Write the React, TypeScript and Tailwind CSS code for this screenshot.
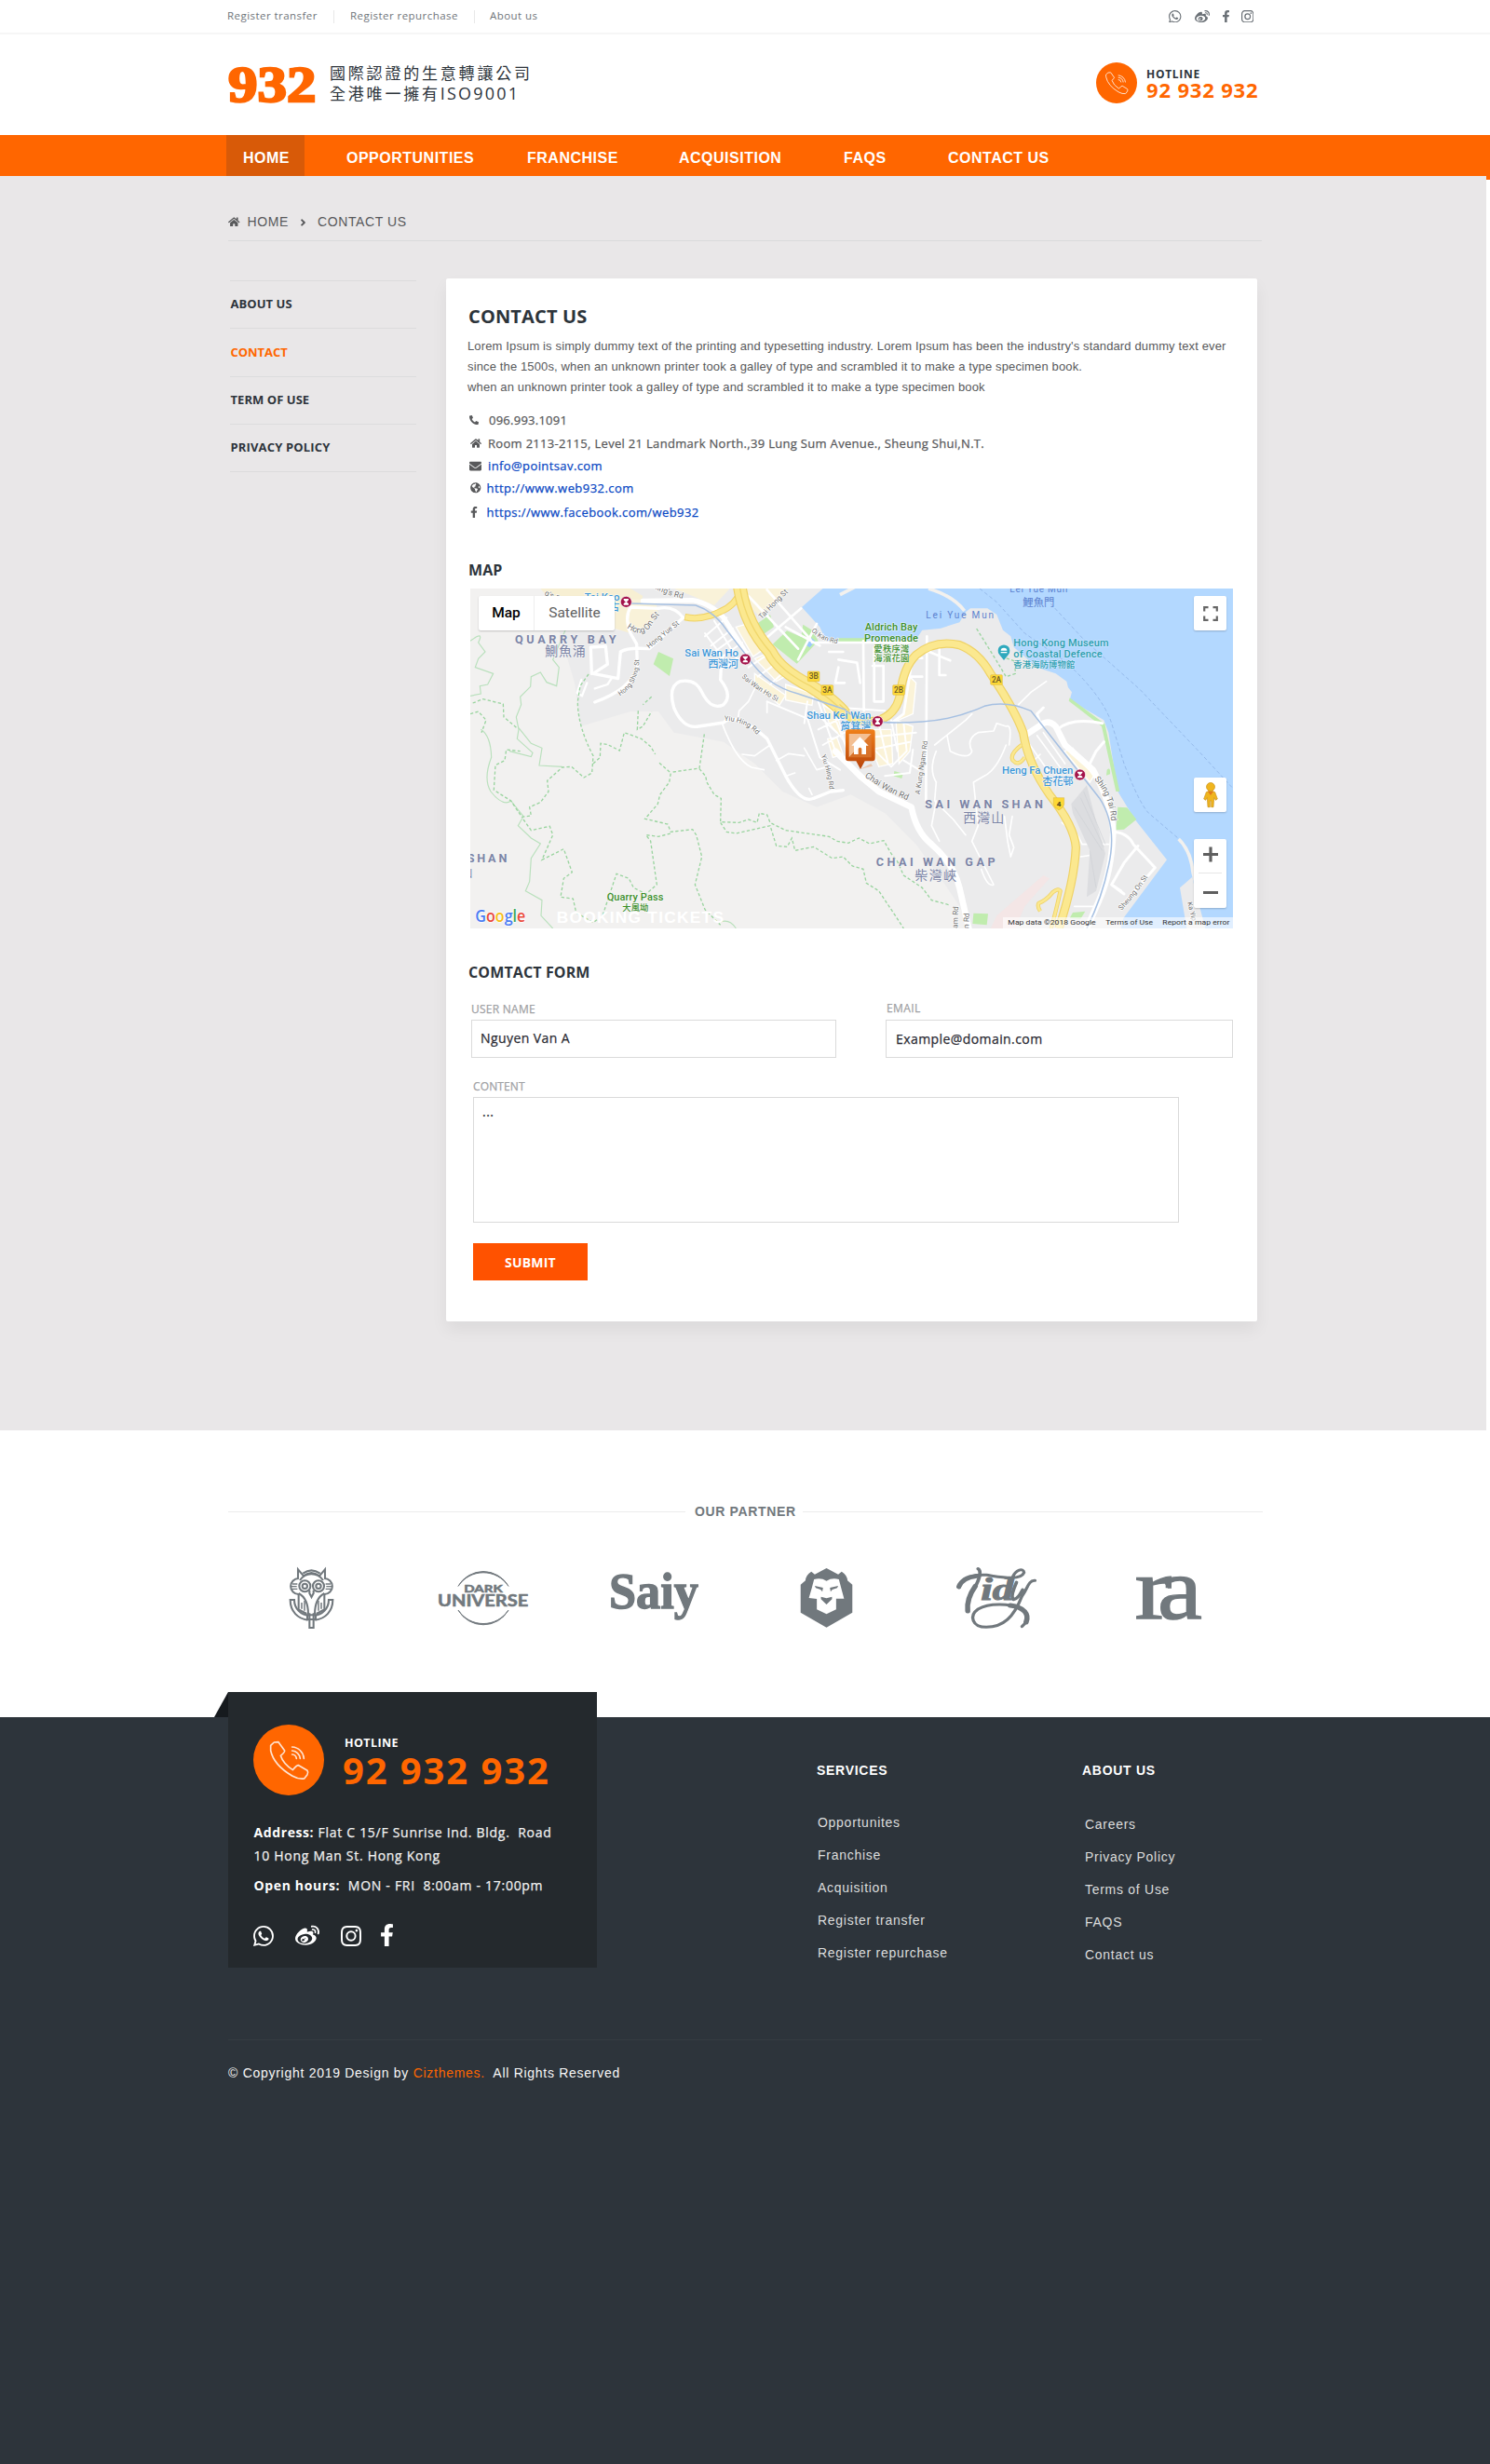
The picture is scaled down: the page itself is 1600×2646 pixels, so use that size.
import React from "react";
import { BsInstagram, BsWhatsapp } from "react-icons/bs";
import { FaAngleRight, FaEnvelope, FaFacebookF, FaGlobeAmericas, FaHome, FaPhoneAlt, FaWeibo } from "react-icons/fa";

const OPEN = "font-['Open_Sans','Noto_Sans_CJK_TC',sans-serif]";
const ARIAL = "font-['Liberation_Sans',Arial,sans-serif]";
const MEDIUM = "[-webkit-text-stroke:0.25px_currentColor]";

function PhoneBadge({ className }: { className: string }) {
  return (
    <svg viewBox="156 156 228 228" className={className}>
      <circle cx="270" cy="270" r="114" fill="#ff6600" />
      <g fill="none" stroke="#ffe3d0" strokeWidth="5" strokeLinejoin="round" strokeLinecap="round">
        <path d="M212 223 L223 213 L237 212 L257 240 Q258 245 244 256 Q252 282 283 302 Q296 286 302 287 L330 304 Q334 310 330 317 L320 330 Q302 333 281 321 Q222 286 212 240 Z" />
        <path d="M281 228 A40 40 0 0 1 319 265 M281 240 A28 28 0 0 1 307 265 M281 252 A15 15 0 0 1 295 265" />
      </g>
    </svg>
  );
}

function Logo932() {
  return (
    <svg className="mt-[31px] h-[46px] w-[96px] overflow-visible" viewBox="0 0 96 46">
      <text x="1" y="41.4" fontFamily="'Liberation Serif',serif" fontWeight="700" fontSize="54.5" fill="#ff6600" stroke="#ff6600" strokeWidth="2.4" textLength="94.5" lengthAdjust="spacingAndGlyphs">932</text>
    </svg>
  );
}

function TopBar() {
  return (
    <div className={`h-[37px] border-b-2 border-[#f6f6f6] ${OPEN} text-[11.5px] leading-[33px] tracking-[0.45px] text-[#6f757a]`}>
      <div className="ml-[244px] flex w-[1102px]">
        <span className="w-[114px] whitespace-nowrap">Register transfer</span>
        <span className="mt-[11px] h-[14px] w-px bg-[#e8e8e8]" />
        <span className="ml-[17px] w-[133px] whitespace-nowrap">Register repurchase</span>
        <span className="mt-[11px] h-[14px] w-px bg-[#e8e8e8]" />
        <span className="ml-[16px] whitespace-nowrap">About us</span>
        <div className="ml-auto flex items-center pt-[2px] text-[#6a7076]">
          <BsWhatsapp className="size-[13.5px]" />
          <FaWeibo className="ml-[14px] size-[16px]" />
          <FaFacebookF className="ml-[13px] h-[13px] w-[9px]" />
          <BsInstagram className="ml-[12px] size-[13.5px]" />
        </div>
      </div>
    </div>
  );
}

function Header() {
  return (
    <header className={`flex h-[108px] ${OPEN}`}>
      <div className="ml-[244px]">
        <Logo932 />
      </div>
      <div className="ml-[14px] mt-[30px] whitespace-nowrap font-['Noto_Sans_CJK_TC',sans-serif] text-[17px] leading-[22px] tracking-[2.8px] text-[#2d343b]">
        <div className="h-[22px]">國際認證的生意轉讓公司</div>
        <div className="h-[22px]">全港唯一擁有<span className="font-['Open_Sans',sans-serif] text-[18px] tracking-[2.2px]">ISO9001</span></div>
      </div>
      <PhoneBadge className="ml-auto mt-[30px] size-[44px]" />
      <div className="ml-[10px] mr-[245px] mt-[36px] w-[124px] whitespace-nowrap font-bold">
        <div className="text-[12px] leading-[13px] tracking-[0.7px] text-[#2d343b]">HOTLINE</div>
        <div className="text-[22px] leading-[20px] tracking-[0.84px] text-[#ff6600]">92 932 932</div>
      </div>
    </header>
  );
}

function Nav() {
  return (
    <nav className={`flex h-[44px] bg-[#ff6600] pl-[243px] ${ARIAL} text-[16px] font-bold leading-[20px] tracking-[0.5px] text-white`}>
      <a className="mr-[45px] w-[84px] bg-[#d85a08] pl-[18px] pt-[15px]">HOME</a>
      <a className="w-[194px] pt-[15px]">OPPORTUNITIES</a>
      <a className="w-[163px] pt-[15px]">FRANCHISE</a>
      <a className="w-[177px] pt-[15px]">ACQUISITION</a>
      <a className="w-[112px] pt-[15px]">FAQS</a>
      <a className="pt-[15px]">CONTACT US</a>
    </nav>
  );
}

function Station({ x, y }: { x: number; y: number }) {
  return (
    <g transform={`translate(${x} ${y})`}>
      <circle r="18" fill="#a3134a" stroke="#fff" strokeWidth="2" />
      <path d="M-8 -8 H8 M-8 8 H8 M0 -8 V8 M-6 -7 L6 7 M6 -7 L-6 7" stroke="#fff" strokeWidth="4" fill="none" />
    </g>
  );
}

function Shield({ x, y, t }: { x: number; y: number; t: string }) {
  return (
    <g transform={`translate(${x} ${y})`}>
      <rect x="-19" y="-16" width="38" height="32" rx="3" fill="#fdd835" stroke="#d9b53a" strokeWidth="1.5" />
      <text y="9" textAnchor="middle" fontSize="25" fontWeight="500" fill="#6b5a2a">{t}</text>
    </g>
  );
}

function MapCanvas() {
  return (
    <svg className="block h-[365px] w-[819px]" viewBox="44 36 2457 1095" preserveAspectRatio="none" fontFamily="Roboto,'Noto Sans CJK TC',sans-serif">
      <defs>
        <linearGradient id="pin" x1="0" y1="0" x2="0" y2="1">
          <stop offset="0" stopColor="#f08019" />
          <stop offset="1" stopColor="#b8430a" />
        </linearGradient>
        <path id="kings" d="M630 32 Q690 66 756 72" />
        <path id="hongOn" d="M548 162 Q600 200 628 155 T676 108" />
        <path id="yue" d="M620 230 L724 146" />
        <path id="shing" d="M526 382 Q590 345 588 258" />
        <path id="swh" d="M918 322 Q960 360 1036 402" />
        <path id="yiu" d="M862 462 Q930 462 972 512" />
        <path id="yiu2" d="M1174 574 Q1200 640 1202 700" />
        <path id="tai" d="M982 136 L1076 40" />
        <path id="oikan" d="M1142 172 Q1170 206 1240 216" />
        <path id="chai" d="M84 642 Q150 690 232 722" />
        <path id="kung" d="M262 700 L292 500" />
        <path id="shingtai" d="M824 650 Q880 710 880 810" />
        <path id="sheung" d="M912 1074 Q970 1010 1006 950" />
      </defs>

      <rect x="44" y="36" width="2457" height="1095" fill="#f2f1f0" />
      {/* built-up ground */}
      <path d="M330 170 L380 340 L400 480 L560 432 L650 432 L700 500 L860 530 L960 600 L1050 690 L1160 740 L1270 700 L1380 760 L1480 860 L1560 970 L1620 1060 L1650 1131 H2501 V36 H540 V170Z" fill="#ebebec" />
      <path d="M270 36 H560 L600 60 L560 180 L510 165 V60 H290Z" fill="#f7efd3" />
      <path d="M560 70 L640 70 L650 120 L590 180 L550 150Z M930 36 L1070 36 L980 130 L940 90Z M700 36 L880 36 L830 90 L760 60Z" fill="#f9f2d9" />

      {/* harbour and strait */}
      <path d="M1180 36 L1112 96 L1170 160 L1190 205 L1480 200 L1500 170 L1560 164 L1620 145 L1640 112 L1655 100 L1710 100 L1740 120 L1760 170 L1785 190 L1795 225 L1870 290 L1930 310 L1965 335 L1970 355 L1982 370 L1975 395 L2085 460 L2100 500 L2130 690 L2185 780 L2288 910 L2148 1098 L2140 1131 H2501 V36Z" fill="#b3d8ff" />
      <path d="M2370 965 L2330 1000 L2352 1131 H2412 L2380 1010Z" fill="#ebebec" />
      <path d="M2326 843 Q2365 880 2372 950 L2400 1060 M1235 56 L1285 30 M1520 36 Q1600 60 1636 108" fill="none" stroke="#f3f1ee" strokeWidth="11" />
      <path d="M1685 36 L1740 80 L1830 180 L1960 270 Q2080 380 2110 470 L2150 600 Q2200 730 2230 760 L2326 842 M1900 70 L2020 200 L2200 360 L2400 570 L2501 680" fill="none" stroke="#8fb3e6" strokeWidth="2.5" strokeDasharray="12 8" />

      {/* parks */}
      <path d="M650 240 L698 262 L686 318 L634 280Z M970 148 L1010 120 L1022 160 L985 185Z M1018 216 L1064 172 L1110 192 L1116 152 L1145 170 L1165 205 L1096 278Z M1230 196 H1330 L1310 210 H1230Z M1410 624 L1438 632 L1434 648 L1408 640Z M1665 1082 L1712 1084 L1708 1120 L1662 1116Z M2130 740 L2160 742 L2190 780 L2150 812 L2124 814Z M2095 620 q12 -12 10 14 l-12 4Z M1975 388 L2088 472 L2136 690 L2124 690 L2078 480 L1972 398Z M1985 1080 L2025 1076 L2010 1100 L1975 1098Z" fill="#c0ecae" />
      <path d="M1125 218 L1142 194 L1155 205 L1138 226Z" fill="#9cc9fb" />

      {/* pale blocks */}
      <g fill="#fbf3d8" stroke="#fff" strokeWidth="4">
        <path d="M900 160 L935 150 L985 235 L955 255Z M960 262 L1010 240 L1075 310 L1030 335Z M960 310 L1010 345 L1060 380 L1040 412 L960 340Z M1060 345 L1150 375 L1145 412 L1060 395Z M1180 410 L1225 440 L1250 530 L1200 470Z M1195 520 L1225 515 L1245 570 L1212 580Z" />
        <path d="M1400 470 L1470 440 L1480 340 L1460 320 L1440 440 M1330 490 L1400 490 L1405 600 L1360 610 L1340 560Z M1415 460 L1470 480 L1460 560 L1425 600Z" />
        <path d="M1958 560 L1985 550 L2052 640 L2040 660Z" />
      </g>
      <path d="M1740 1090 L1890 960 L1910 970 L1830 1060 L1800 1131 H1720Z" fill="#f4e6e6" />

      {/* minor roads */}
      <g fill="none" stroke="#fff" strokeWidth="7" strokeLinecap="round" strokeLinejoin="round">
        <path d="M435 310 L432 225 L480 222 L486 280 L440 310 L520 326 L528 240 Q550 225 620 230 L730 130 Q700 90 650 100 L560 96 Q540 130 560 180 L580 215 L582 290 Q560 360 445 402" strokeWidth="10" />
        <path d="M402 330 L388 372 L404 382 L420 340 M500 324 L486 345 L445 358" />
        <path d="M600 76 L760 74 Q820 84 860 130 L930 240" strokeWidth="16" />
        <path d="M700 420 Q680 350 720 335 Q770 325 790 370 Q820 430 860 410 Q890 380 850 330 L852 290 L880 270 M700 420 Q730 490 780 480 L860 468 Q900 430 1000 520 L1060 640 Q1110 730 1150 712 L1205 690 Q1220 690 1245 686" strokeWidth="10" />
        <path d="M855 470 Q900 590 950 612 L990 620 M905 465 L910 430 L940 400 L960 360 M1000 436 L1000 400 M1010 540 L960 575 L920 570 M1030 590 L1070 568 L1120 575 M1062 640 L1090 630 M1120 550 L1160 620 L1195 610 M1135 680 L1145 700" strokeWidth="5" />
        <path d="M800 190 L870 130 M820 220 L890 165 M830 240 L900 190 M850 260 L920 210 M870 290 L940 240 M830 140 L905 265 M800 180 L880 290 M940 290 L1000 250 M970 320 L1040 270 M1010 345 L1060 300 M1000 400 L1130 455 L1170 580 L1235 620 M1130 400 L1120 470 M1165 400 L1220 560 M1195 390 L1260 560 M1150 430 L1225 500 M1165 490 L1245 450 M1180 540 L1250 500" strokeWidth="6" />
        <path d="M940 60 L1100 230 M1000 40 L1140 200 M1110 100 L980 210 M1160 150 L1100 265 M1060 160 L1170 220 M1145 210 H1460 M1200 240 H1245 M1230 290 L1220 340 H1250" strokeWidth="8" />
        <path d="M1310 205 L1312 430 M1345 225 V400 M1230 265 L1290 275 L1300 340 M1340 285 H1375 V400 H1345 M1400 260 H1500 M1490 240 L1520 220 L1590 215 M1555 230 V315 H1575 M1515 190 L1512 720 M1460 320 L1500 320 M1470 250 L1440 440 L1400 470 M1500 230 L1590 268" strokeWidth="8" />
        <path d="M1240 420 L1380 430 M1240 470 L1300 540 M1290 520 L1480 500 M1340 550 L1400 610 L1450 560 L1440 470 M1360 470 L1390 600 M1400 460 L1420 560 M1310 560 L1460 530 M1470 555 L1460 630 L1380 640 M1490 620 L1440 590" strokeWidth="6" />
        <path d="M1220 560 L1300 640 L1360 690 L1465 740 Q1480 820 1530 860 Q1600 920 1620 1000 L1650 1131" strokeWidth="20" />
        <path d="M1830 510 L1890 470 Q1910 460 1930 480 L1960 540 L2050 620 Q2110 730 2115 820 Q2110 950 2070 1040 L2030 1131" strokeWidth="20" />
        <path d="M2110 820 Q2160 820 2180 860 L2250 935 L2150 1050 M2195 865 L2150 920 L2110 990 L2140 1010 M2110 990 L2150 1020 M1880 470 L1870 440 L1890 420 M1935 490 Q1980 450 2080 470 M2040 600 L2060 560 L2085 530" strokeWidth="9" />
        <path d="M1840 530 L1910 630 M1870 510 L1950 620 M1850 600 L1880 570 M1890 500 L1960 600 M1950 790 L2000 830 L2015 860 H2100 M2010 900 L2080 890 M1990 1060 H2050" strokeWidth="5" />
      </g>
      <g fill="none" stroke="#fff" strokeWidth="5" strokeLinecap="round" strokeLinejoin="round">
        <path d="M1540 540 L1640 460 L1660 440 M1580 510 L1590 560 Q1650 590 1660 560 Q1640 520 1680 500 L1730 495 L1740 470 L1770 480 Q1790 470 1780 540 M1770 540 Q1740 620 1700 640 L1665 660 L1680 800 L1660 850 L1730 990 Q1710 1000 1690 940 M1545 560 Q1520 620 1545 660 L1540 720 L1600 780 L1640 830 M1545 720 L1530 800 L1555 850 M1790 770 L1780 830 L1795 870 L1785 900 L1775 850 L1765 770 M1810 410 L1850 370 L1900 335" />
      </g>
      <path d="M1980 730 L2030 670 Q2060 790 2090 890 L2060 1010 L2030 1030 L2040 880 L1985 760Z" fill="#dcdde0" />
      <path d="M1990 740 L2080 880 M2010 710 L2085 870 M2020 690 L2090 860 M2040 880 L2060 1000" fill="none" stroke="#cdd0d5" strokeWidth="2" />

      {/* expressways */}
      <g fill="none" strokeLinecap="butt" strokeLinejoin="round">
        <path d="M920 36 Q900 90 850 110 Q790 140 735 128" stroke="#f0d264" strokeWidth="22" />
        <path d="M920 36 Q900 90 850 110 Q790 140 737 128" stroke="#fbe88f" strokeWidth="16" />
        <path d="M912 30 Q930 150 1010 240 Q1040 300 1140 350 Q1220 400 1250 440" stroke="#efd266" strokeWidth="44" />
        <path d="M912 30 Q930 150 1010 240 Q1040 300 1140 350 Q1220 400 1250 440" stroke="#fbe88f" strokeWidth="37" />
        <path d="M912 30 Q930 150 1010 240 Q1040 300 1140 350 Q1220 400 1250 440" stroke="#f1d76c" strokeWidth="4" />
        <path d="M1225 418 Q1290 480 1360 460 Q1420 440 1430 370 Q1440 290 1480 250 Q1540 200 1620 218 Q1680 240 1720 310 Q1800 430 1825 500 Q1840 600 1910 700 Q1990 800 1995 870 Q1990 980 1940 1131" stroke="#efd266" strokeWidth="28" />
        <path d="M1225 418 Q1290 480 1360 460 Q1420 440 1430 370 Q1440 290 1480 250 Q1540 200 1620 218 Q1680 240 1720 310 Q1800 430 1825 500 Q1840 600 1910 700 Q1990 800 1995 870 Q1990 980 1940 1131" stroke="#fbe88f" strokeWidth="21" />
        <path d="M1820 540 Q1780 570 1792 590 Q1810 610 1830 580 M1915 1131 Q1930 1080 1945 1010 Q1940 1000 1920 1015 Q1900 1040 1875 1050 Q1870 1060 1880 1075" stroke="#efd266" strokeWidth="13" />
        <path d="M1820 540 Q1780 570 1792 590 Q1810 610 1830 580 M1915 1131 Q1930 1080 1945 1010 Q1940 1000 1920 1015 Q1900 1040 1875 1050 Q1870 1060 1880 1075" stroke="#fbe88f" strokeWidth="8" />
      </g>
      <path d="M560 84 L770 90 Q830 110 870 170 L940 260 Q1000 350 1100 375 L1250 425 Q1300 480 1500 465 Q1600 460 1700 415 Q1770 395 1850 430 L1960 570 L2070 710 Q2130 800 2100 930 Q2080 1030 2030 1131" fill="none" stroke="#a6c0e2" strokeWidth="4.5" />

      {/* trails */}
      <g fill="none" stroke="#b9e0bc" strokeWidth="3.5">
        <path d="M44 205 Q90 170 70 210 L92 240 L70 262 L60 290 L118 310 L100 345 L75 350 L78 375 L44 382" />
        <path d="M350 170 L310 265 L330 290 L322 350 L290 338 L270 306 L240 320 L238 352 L205 385 L208 410 L192 450 L200 490 L195 520 L245 565 L240 578 L170 560 M200 485 L240 535 L275 550 L266 606 L340 610" />
        <path d="M78 490 Q110 510 112 580 Q85 650 110 690 Q150 740 175 720 L215 770 L198 800 L240 840 L270 858 L240 905 L235 980 L222 1010 L275 1040 L272 1090 L310 1131 M850 1110 Q880 1100 900 1131" />
      </g>
      <g fill="none" stroke="#9ad49f" strokeWidth="4" strokeDasharray="10 7">
        <path d="M52 405 L85 392 L150 408 L152 450 L195 486 M44 440 L70 432 L95 460 L80 500 M425 312 L398 350 L390 400 Q390 480 440 575 L436 630 L410 645 L370 610 L340 612 L292 655 L296 690 L270 725 L235 740 L240 768 L210 772 L175 720 L120 685 L125 605 L155 590 L160 555 L205 560" />
        <path d="M440 600 L462 580 L464 535 L485 538 L525 558 L540 500 L595 520 L625 545 L640 570 M653 598 L690 630 L685 660 L655 700 L648 730 L607 778 L680 795 L690 820 L760 812 L772 830 L790 900 L768 990 L800 1070 L850 1120 M628 385 L600 410 M585 430 L582 490 L600 480 L628 432 M798 505 L782 615 L690 628 M782 617 L802 640 L806 660 L830 700 L852 712 L850 788 L910 790 L940 780 L968 790 L975 760 L1000 765 L1010 790 L1060 815 L1200 835 L1225 850 M850 790 L870 820 L900 825 L1010 800 L1030 865 L1065 868 L1080 840 L1090 880 L1150 868 L1210 905 L1245 900 L1275 930 L1310 940 L1320 985 L1360 1010 L1400 1070 L1440 1131" />
        <path d="M215 780 L240 815 L300 802 L310 830 L275 910 L345 875 L372 950 L345 970 L335 1030 L375 1035 L385 1080 L440 1112 L470 1090 L490 1030 L515 955 L555 970 L570 1000 L610 1020 L645 990 L625 850 L610 830 L650 835 L690 825" />
        <path d="M1225 850 L1262 856 L1296 840 L1330 858 L1376 848 L1400 890 L1420 915 L1440 960 L1500 1000 L1530 1040 L1590 1056" />
        <path d="M1675 165 L1740 270 L1770 320 L1800 310 L1798 270 L1770 260" />
      </g>

      {/* street names */}
      <g fontSize="25" fill="#6e6e6e" stroke="#fff" strokeWidth="4" paintOrder="stroke" strokeLinejoin="round">
        <text fontSize="26"><textPath href="#kings">King's Rd</textPath></text>
        <text x="282" y="56" transform="rotate(25 282 56)">g's R</text>
        <text fontSize="27"><textPath href="#hongOn">Hong On St</textPath></text>
        <text fontSize="23"><textPath href="#yue">Hong Yue St</textPath></text>
        <text fontSize="22"><textPath href="#shing">Hong Shing St</textPath></text>
        <text fontSize="22"><textPath href="#swh">Sai Wan Ho St</textPath></text>
        <text fontSize="23"><textPath href="#yiu">Yiu Hing Rd</textPath></text>
        <text fontSize="22"><textPath href="#yiu2">Yiu Hing Rd</textPath></text>
        <text fontSize="24"><textPath href="#tai">Tai Hong St</textPath></text>
        <text fontSize="22"><textPath href="#oikan">Oi Kan Rd</textPath></text>
        <g transform="translate(1230 0)">
          <text fontSize="28"><textPath href="#chai">Chai Wan Rd</textPath></text>
          <text fontSize="23"><textPath href="#kung">A Kung Ngam Rd</textPath></text>
          <text fontSize="27"><textPath href="#shingtai">Shing Tai Rd</textPath></text>
          <text fontSize="23"><textPath href="#sheung">Sheung On St</textPath></text>
          <text fontSize="25" transform="translate(384 1131) rotate(-88)">am Rd</text>
          <text fontSize="25" transform="translate(420 1131) rotate(-88)">n Rd</text>
          <text fontSize="22" transform="translate(1124 1048) rotate(75)">Ka Yip</text>
        </g>
      </g>

      {/* district names */}
      <g fill="#7b84a6" fontWeight="700" stroke="#f6f6f6" strokeWidth="3" paintOrder="stroke">
        <text x="188" y="212" fontSize="38" textLength="326">QUARRY BAY</text>
        <text x="285" y="252" fontSize="42" fontWeight="400" textLength="130">鰂魚涌</text>
        <text x="34" y="917" fontSize="38" textLength="128">SHAN</text>
        <text x="14" y="962" fontSize="38" fontWeight="400">山</text>
        <text x="1509" y="745" fontSize="38" textLength="380">SAI WAN SHAN</text>
        <text x="1632" y="788" fontSize="42" fontWeight="400" textLength="132">西灣山</text>
        <text x="1351" y="931" fontSize="38" textLength="384">CHAI WAN GAP</text>
        <text x="1476" y="976" fontSize="42" fontWeight="400" textLength="134">柴灣峽</text>
      </g>
      <g fill="#5c82cf">
        <text x="1512" y="131" fontSize="30" textLength="218">Lei Yue Mun</text>
        <text x="1782" y="49" fontSize="30" textLength="186">Lei Yue Mun</text>
        <text x="1824" y="92" fontSize="34" textLength="102">鯉魚門</text>
      </g>

      {/* places */}
      <g stroke="#fff" strokeOpacity="0.75" strokeWidth="3.5" paintOrder="stroke" strokeLinejoin="round" fontWeight="500">
        <g fill="#3e97d8">
          <text x="412" y="74" fontSize="34">Tai Koo</text>
          <text x="508" y="108" fontSize="34" textAnchor="middle">古</text>
          <text x="735" y="256" fontSize="34" textLength="173">Sai Wan Ho</text>
          <text x="810" y="292" fontSize="34" textLength="98">西灣河</text>
          <text x="1128" y="457" fontSize="34" textLength="207">Shau Kei Wan</text>
          <text x="1236" y="491" fontSize="34" textLength="100">筲箕灣</text>
          <text x="1757" y="632" fontSize="34" textLength="229">Heng Fa Chuen</text>
          <text x="1887" y="669" fontSize="34" textLength="100">杏花邨</text>
        </g>
        <g fill="#3b8e2b">
          <text x="1315" y="171" fontSize="33" textLength="170">Aldrich Bay</text>
          <text x="1313" y="206" fontSize="33" textLength="174">Promenade</text>
          <text x="1344" y="239" fontSize="28" textLength="114">愛秩序灣</text>
          <text x="1344" y="269" fontSize="28" textLength="114">海濱花園</text>
          <text x="484" y="1041" fontSize="33" textLength="182">Quarry Pass</text>
          <text x="534" y="1073" fontSize="28" textLength="84">大風坳</text>
        </g>
        <g fill="#2c9fae" strokeOpacity="0.4">
          <text x="1794" y="223" fontSize="33" textLength="307">Hong Kong Museum</text>
          <text x="1794" y="258" fontSize="33" textLength="286">of Coastal Defence</text>
          <text x="1794" y="291" fontSize="28" textLength="198">香港海防博物館</text>
        </g>
      </g>
      <path d="M1763 267 L1748 248 A19 19 0 1 1 1778 248Z" fill="#2fa9bd" />
      <path d="M1753 236 a10 9 0 0 1 20 0Z M1753 240 h20 v4 h-20Z" fill="#fff" />
      <Station x={546} y={79} />
      <Station x={930} y={264} />
      <Station x={1356} y={464} />
      <Station x={2008} y={636} />
      <Shield x={1150} y={319} t="3B" />
      <Shield x={1194} y={363} t="3A" />
      <Shield x={1424} y={363} t="2B" />
      <Shield x={1739} y={330} t="2A" />
      <path d="M1923 710 H1957 V732 Q1955 742 1940 750 Q1925 742 1923 732Z" fill="#fdd835" stroke="#d9b53a" strokeWidth="1.5" />
      <text x="1940" y="737" fontSize="24" fontWeight="700" fill="#4b431e" textAnchor="middle">4</text>

      {/* home marker */}
      <path d="M1300 618 L1335 600 L1340 608Z" fill="#e9b48f" opacity="0.6" />
      <path d="M1262 490 H1339 Q1348 490 1348 500 V582 Q1348 592 1339 592 H1315 L1301 618 L1287 592 H1262 Q1253 592 1253 582 V500 Q1253 490 1262 490Z" fill="url(#pin)" />
      <path d="M1264 504 H1336 L1264 580Z" fill="#f3bf93" />
      <path d="M1336 504 V580 H1264Z" fill="#dd7c34" opacity="0.7" />
      <path d="M1299 514 L1327 542 H1319 V570 H1305 V552 Q1299 545 1294 552 V570 H1280 V542 H1272Z" fill="#fff" />

      {/* attribution */}
      <rect x="1760" y="1095" width="741" height="36" fill="#fff" opacity="0.6" />
      <g fill="#333" fontSize="24" fontFamily="Roboto,sans-serif">
        <text x="1776" y="1119" textLength="283" lengthAdjust="spacingAndGlyphs">Map data ©2018 Google</text>
        <text x="2091" y="1119" textLength="152" lengthAdjust="spacingAndGlyphs">Terms of Use</text>
        <text x="2274" y="1119" textLength="216" lengthAdjust="spacingAndGlyphs">Report a map error</text>
      </g>
      <text x="60" y="1110" fontSize="54" fontFamily="'Open Sans',sans-serif" fontWeight="600" textLength="162" lengthAdjust="spacingAndGlyphs" stroke="#fff" strokeWidth="4" paintOrder="stroke">
        <tspan fill="#4a7cf3">G</tspan><tspan fill="#ea4a3c">o</tspan><tspan fill="#f7bd16">o</tspan><tspan fill="#4a7cf3">g</tspan><tspan fill="#3aa757">l</tspan><tspan fill="#ea4a3c">e</tspan>
      </text>
      <text x="322" y="1112" fontSize="52" fontFamily="'Liberation Sans',sans-serif" fontWeight="700" fill="#fff" textLength="538">BOOKING TICKETS</text>
    </svg>
  );
}

function MapPanel() {
  return (
    <div className="relative ml-[2px] mt-[8px] h-[365px] w-[819px] overflow-hidden">
      <MapCanvas />
      <div className="absolute left-[9px] top-[8px] flex h-[37px] w-[146px] rounded-[2px] bg-white font-[Roboto,sans-serif] text-[15.5px] leading-[36px] shadow-[0_1px_2px_rgba(0,0,0,0.2)]">
        <div className="w-[60px] border-r border-[#eee] text-center font-medium text-black">Map</div>
        <div className="flex-1 text-center text-[#616161]">Satellite</div>
      </div>
      <div className="absolute right-[7px] top-[8px] grid h-[37px] w-[35px] place-items-center rounded-[2px] bg-white shadow-[0_1px_2px_rgba(0,0,0,0.2)]">
        <svg viewBox="0 0 16 16" className="size-[16px]" fill="none" stroke="#666" strokeWidth="2.2">
          <path d="M1.2 5.5V1.2H5.5 M10.5 1.2H14.8V5.5 M14.8 10.5V14.8H10.5 M5.5 14.8H1.2V10.5" />
        </svg>
      </div>
      <div className="absolute right-[7px] top-[203px] grid h-[37px] w-[35px] place-items-center rounded-[2px] bg-white shadow-[0_1px_2px_rgba(0,0,0,0.2)]">
        <svg viewBox="0 0 48 84" className="h-[28px] w-[16px]">
          <path d="M10 32 Q24 24 38 32 L46 54 L40 58 L35 50 L33 80 H26 V60 H22 V80 H15 L13 50 L8 58 L2 54Z" fill="#f0b51e" stroke="#c8911a" strokeWidth="2" />
          <circle cx="24" cy="15" r="13.5" fill="#f0b51e" stroke="#c8911a" strokeWidth="2" />
          <path d="M14 28 Q24 34 34 28 L24 42Z" fill="#e2761b" />
        </svg>
      </div>
      <div className="absolute right-[7px] top-[269px] flex h-[74px] w-[35px] flex-col items-center rounded-[2px] bg-white shadow-[0_1px_2px_rgba(0,0,0,0.2)]">
        <svg viewBox="0 0 16 74" className="h-[74px] w-[16px]">
          <path d="M0 16.5H16 M8 8.5V24.5 M0 57.5H16" stroke="#5f5f5f" strokeWidth="3.2" fill="none" />
        </svg>
        <span className="absolute top-[36px] h-px w-[25px] bg-[#e6e6e6]" />
      </div>
    </div>
  );
}

function Sidebar() {
  return (
    <aside className="ml-[2px] mt-[42px] w-[200px] text-[13px] font-bold leading-[49px] tracking-[0.05px] text-[#2d343b]">
      <div className="h-[51px] border-t border-[#dcdcdd] pl-[0.5px]">ABOUT US</div>
      <div className="h-[52px] border-t border-[#dcdcdd] pl-[0.5px] leading-[51px] tracking-[-0.05px] text-[#ff6600]">CONTACT</div>
      <div className="h-[51px] border-t border-[#dcdcdd] pl-[0.5px]">TERM OF USE</div>
      <div className="h-[52px] border-y border-[#dcdcdd] pl-[0.5px] tracking-[0.15px]">PRIVACY POLICY</div>
    </aside>
  );
}

function ContactCard() {
  return (
    <section className="ml-[32px] mt-[40px] h-[1120px] w-[871px] rounded-[2px] bg-white pl-[24px] shadow-[0_9px_18px_rgba(0,0,0,0.06)]">
      <h1 className="mt-[27px] text-[20px] font-bold leading-[28px] tracking-[0.15px] text-[#2d343b]">CONTACT US</h1>
      <div className={`-ml-px mt-[7px] whitespace-nowrap ${ARIAL} text-[13px] leading-[22px] tracking-[0.135px] text-[#58595b]`}>
        <p>Lorem Ipsum is simply dummy text of the printing and typesetting industry. Lorem Ipsum has been the industry's standard dummy text ever</p>
        <p>since the 1500s, when an unknown printer took a galley of type and scrambled it to make a type specimen book.</p>
        <p>when an unknown printer took a galley of type and scrambled it to make a type specimen book</p>
      </div>
      <ul className={`mt-[12px] whitespace-nowrap text-[13px] leading-[24px] text-[#58595b] ${MEDIUM}`}>
        <li className="flex h-[24px] items-center pl-px">
          <FaPhoneAlt className="size-[10px]" />
          <span className="ml-[11px] tracking-[0.25px]">096.993.1091</span>
        </li>
        <li className="mt-px flex h-[24px] items-center pl-[2px]">
          <FaHome className="size-[12px]" />
          <span className="ml-[7px] tracking-[0.31px]">Room 2113-2115, Level 21 Landmark North.,39 Lung Sum Avenue., Sheung Shui,N.T.</span>
        </li>
        <li className="flex h-[24px] items-center pl-px">
          <FaEnvelope className="size-[13px]" />
          <span className="ml-[7px] tracking-[0.4px] text-[#0a48c4]">info@pointsav.com</span>
        </li>
        <li className="flex h-[24px] items-center pl-[2px]">
          <FaGlobeAmericas className="size-[11.5px]" />
          <span className="ml-[6px] tracking-[0.44px] text-[#0a48c4]">http://www.web932.com</span>
        </li>
        <li className="mt-[2px] flex h-[24px] items-center pl-[2px]">
          <FaFacebookF className="h-[12px] w-[8px]" />
          <span className="ml-[9.5px] tracking-[0.41px] text-[#0a48c4]">https://www.facebook.com/web932</span>
        </li>
      </ul>
      <h2 className="mt-[38px] text-[16px] font-bold leading-[24px] tracking-[0.05px] text-[#2d343b]">MAP</h2>
      <MapPanel />
      <h2 className="mt-[35px] text-[16px] font-bold leading-[24px] tracking-[0.12px] text-[#2d343b]">COMTACT FORM</h2>
      <form className="ml-[3px]">
        <div className="flex gap-[53px]">
          <label className="block w-[392px]">
            <span className={`mt-[20px] block text-[12px] leading-[16px] tracking-[0.25px] text-[#9fa1a4] ${MEDIUM}`}>USER NAME</span>
            <input className={`mt-[3px] block h-[41px] w-full border border-[#dadada] bg-white pb-[2px] pl-[9px] text-[14px] tracking-[0.42px] text-[#2b2b33] ${MEDIUM}`} defaultValue="Nguyen Van A" />
          </label>
          <label className="block w-[373px]">
            <span className={`ml-px mt-[19px] block text-[12px] leading-[16px] tracking-[0.4px] text-[#9fa1a4] ${MEDIUM}`}>EMAIL</span>
            <input className={`mt-[4px] block h-[41px] w-full border border-[#dadada] bg-white pl-[10px] text-[14px] tracking-[0.42px] text-[#2b2b33] ${MEDIUM}`} defaultValue="Example@domain.com" />
          </label>
        </div>
        <label className="ml-[2px] block">
          <span className={`mt-[23px] block text-[12px] leading-[16px] tracking-[0.13px] text-[#9fa1a4] ${MEDIUM}`}>CONTENT</span>
          <textarea className={`mt-[3px] block h-[135px] w-[758px] resize-none overflow-hidden border border-[#dadada] bg-white pl-[9px] pt-[5px] text-[14px] leading-[20px] tracking-[0.5px] text-[#2b2b33] ${MEDIUM}`} defaultValue="..." />
        </label>
        <button type="button" className="ml-[2px] mt-[22px] block h-[40px] w-[123px] bg-[#ff5200] text-[14px] font-bold leading-[41px] tracking-[0.19px] text-white">SUBMIT</button>
      </form>
    </section>
  );
}

function Main() {
  return (
    <div className="flex h-[1347px]">
      <main className={`h-[1347px] w-[1596px] bg-[#e9e7e8] pl-[245px] ${OPEN}`}>
        <div className={`flex h-[70px] w-[1110px] border-b border-[#dadadb] pt-[39px] ${ARIAL} text-[14px] leading-[20px] text-[#58595b]`}>
          <FaHome className="mt-[4px] size-[12.5px]" />
          <span className="ml-[8px] w-[56.5px] tracking-[0.6px]">HOME</span>
          <FaAngleRight className="mt-[4.5px] h-[12px] w-[7px]" />
          <span className="ml-[12px] tracking-[0.6px]">CONTACT US</span>
        </div>
        <div className="flex">
          <Sidebar />
          <ContactCard />
        </div>
      </main>
      <div className="h-[4px] w-[4px] bg-[#ff6600]" />
    </div>
  );
}

const INK = "#71787d";

function OwlLogo() {
  return (
    <svg viewBox="27 21 156 204" className="ml-[309px] h-[68px] w-[52px] shrink-0">
      <g fill="none" stroke={INK} strokeWidth="6.2" strokeLinejoin="miter">
        <path d="M60 62 V31 L78 52 Q103 32 129 52 L147 31 V62" />
        <path d="M76 44 Q103 24 131 44 M66 66 Q80 46 103 46 Q127 46 141 66" />
        <path d="M62 60 A25.5 25.5 0 1 0 62 111 M145 60 A25.5 25.5 0 1 1 145 111" />
        <circle cx="82" cy="85" r="18" />
        <circle cx="82" cy="85" r="8" />
        <circle cx="126" cy="85" r="18" />
        <circle cx="126" cy="85" r="8" />
        <path d="M97 98 V108 L103.5 120 L110 108 V98" />
        <path d="M42 78 H58 M38 86 H56 M42 94 H58 M149 78 H165 M151 86 H169 M149 94 H165" strokeWidth="4" />
        <path d="M62 108 V160 L88 174 M145 108 V160 L119 174" />
        <path d="M62 108 C88 122 93 150 93 176 M145 108 C119 122 114 150 114 176" />
        <path d="M72 138 V158 M81 132 V164 M135 138 V158 M126 132 V164" strokeWidth="4.5" />
        <path d="M92 194 C60 190 35 167 35 129 H48 C48 158 70 178 94 179 M115 194 C147 190 172 167 172 129 H159 C159 158 137 178 113 179" />
        <path d="M97 172 V219 H110 V172 M90 178 H117 V192 H90Z" />
      </g>
    </svg>
  );
}

function DarkUniverseLogo() {
  return (
    <svg viewBox="513 21 288 204" className="ml-[110px] h-[68px] w-[96px] shrink-0 overflow-visible">
      <path d="M576 85 A93 93 0 0 1 738 85 A97 97 0 0 0 576 85Z M576 162 A93 93 0 0 0 738 162 A97 97 0 0 1 576 162Z" fill={INK} stroke={INK} strokeWidth="3" />
      <g fill={INK} stroke={INK} strokeWidth="1.6" fontFamily="Lato,sans-serif" fontWeight="700">
        <text x="595" y="106" fontSize="33" textLength="124" lengthAdjust="spacingAndGlyphs">DARK</text>
        <text x="510" y="151" fontSize="50" textLength="292" lengthAdjust="spacingAndGlyphs">UNIVERSE</text>
      </g>
    </svg>
  );
}

function SaiyLogo() {
  return (
    <svg viewBox="1065 21 285 204" className="ml-[88px] h-[68px] w-[95px] shrink-0 overflow-visible">
      <g fill={INK} stroke={INK} strokeWidth="4" fontFamily="'Liberation Serif',serif" fontWeight="700">
        <text x="1062" y="156" fontSize="162" textLength="288" lengthAdjust="spacingAndGlyphs">Saiy</text>
      </g>
    </svg>
  );
}

function LionLogo() {
  return (
    <svg viewBox="159 276 154 204" preserveAspectRatio="none" className="ml-[109px] h-[68px] w-[57px] shrink-0">
      <path d="M161 335 L175 322 Q176 304 192 293 L202 302 L236 282 L270 302 L280 293 Q296 304 297 322 L311 335 V425 L236 473 L161 425Z" fill={INK} />
      <path d="M200 318 Q220 312 236 323 Q252 312 272 318 Q280 352 287 380 H264 V415 L236 430 L208 415 V381 L185 378 Q194 345 200 318Z" fill="#fff" />
      <path d="M202 339 L226 345 L224 358 L219 351 L205 346Z M270 339 L246 345 L248 358 L253 351 L267 346Z M220 374 L236 379 L252 374 V382 L236 399 L220 382Z" fill={INK} />
    </svg>
  );
}

function TidyLogo() {
  return (
    <svg viewBox="613 276 236 204" preserveAspectRatio="none" className="ml-[111px] h-[68px] w-[87px] shrink-0">
      <g fill="none" stroke={INK} strokeLinecap="round" strokeLinejoin="round">
        <path d="M622 344 C626 310 672 302 700 304 C740 310 800 324 810 296 C808 280 786 286 776 312" strokeWidth="9" />
        <path d="M620 342 C628 318 650 310 672 307" strokeWidth="14" />
        <path d="M676 284 C688 292 678 322 666 346" strokeWidth="10" />
        <path d="M668 340 Q642 380 646 420" strokeWidth="15" />
        <path d="M842 322 C822 320 820 350 804 372 C780 440 750 472 700 472 C660 472 648 436 676 414 C710 392 770 398 798 410 C826 424 824 452 804 470" strokeWidth="9" />
        <path d="M770 402 C810 408 826 430 816 456" strokeWidth="15" />
      </g>
      <text x="684" y="384" fill={INK} stroke={INK} strokeWidth="3" fontFamily="'Liberation Serif',serif" fontStyle="italic" fontWeight="700" fontSize="98" textLength="96" lengthAdjust="spacingAndGlyphs">id</text>
      <path d="M788 328 Q770 372 778 382 Q790 386 806 352" fill="none" stroke={INK} strokeWidth="10" strokeLinecap="round" />
    </svg>
  );
}

function RaLogo() {
  return (
    <svg viewBox="1132 276 193 204" preserveAspectRatio="none" className="ml-[105px] h-[68px] w-[71px] shrink-0 overflow-visible">
      <g fill={INK} stroke={INK} strokeWidth="4" fontFamily="'Liberation Serif',serif">
        <text x="1131" y="443" fontSize="284" textLength="108" lengthAdjust="spacingAndGlyphs">r</text>
        <text x="1197" y="443" fontSize="284" textLength="130" lengthAdjust="spacingAndGlyphs">a</text>
      </g>
    </svg>
  );
}

function Partners() {
  return (
    <section className="h-[308px] pt-[76px]">
      <div className={`ml-[245px] flex w-[1111px] items-center ${ARIAL} text-[14px] font-bold leading-[22px] tracking-[0.65px] text-[#71787d]`}>
        <span className="h-px w-[491px] bg-[#ececec]" />
        <span className="ml-[10px] w-[116px] whitespace-nowrap">OUR PARTNER</span>
        <span className="h-px flex-1 bg-[#ececec]" />
      </div>
      <div className="mt-[48px] flex">
        <OwlLogo />
        <DarkUniverseLogo />
        <SaiyLogo />
        <LionLogo />
        <TidyLogo />
        <RaLogo />
      </div>
    </section>
  );
}

function LinkColumn({ title, links, className, listClass }: { title: string; links: string[]; className: string; listClass: string }) {
  return (
    <div className={`${className} ${ARIAL} whitespace-nowrap text-[14px] tracking-[0.72px]`}>
      <h3 className="mt-[47px] font-bold leading-[20px] text-white">{title}</h3>
      <ul className={`${listClass} leading-[35px] text-[#dcdddd]`}>
        {links.map((l) => (
          <li key={l}>{l}</li>
        ))}
      </ul>
    </div>
  );
}

function Footer() {
  return (
    <footer className="h-[802px] bg-[#2d343b]">
      <div className="flex h-[269px] pl-[230px]">
        <svg viewBox="0 0 15 27" className="-mt-[27px] h-[27px] w-[15px]">
          <path d="M15 0V27H0Z" fill="#161a1e" />
        </svg>
        <div className={`-mt-[27px] h-[296px] w-[396px] bg-[#24292d] pl-[27px] pt-[35px] ${OPEN} text-[14px] text-white`}>
          <div className="flex h-[76px]">
            <PhoneBadge className="size-[76px]" />
            <div className="ml-[20px] mt-[10px] whitespace-nowrap">
              <div className="ml-[2px] text-[12.5px] font-bold leading-[19px] tracking-[0.4px]">HOTLINE</div>
              <div className="text-[40px] font-bold leading-[39px] tracking-[1.9px] text-[#ff6600]">92 932 932</div>
            </div>
          </div>
          <div className={`ml-[0.5px] mt-[27px] whitespace-pre leading-[25px] tracking-[0.71px] text-[#f1f1f1]`}>
            <p><b className="tracking-[0.6px] text-white">Address:</b><span className={MEDIUM}>{" Flat C 15/F Sunrise Ind. Bldg.  Road"}</span></p>
            <p className={MEDIUM}>10 Hong Man St. Hong Kong</p>
            <p className="mt-[7px]"><b className="tracking-[0.65px] text-white">Open hours:</b><span className={MEDIUM}>{"  MON - FRI  8:00am - 17:00pm"}</span></p>
          </div>
          <div className="mt-[29px] flex h-[24px] items-end">
            <BsWhatsapp className="size-[22px]" />
            <FaWeibo className="ml-[23px] -mb-[2px] size-[26px]" />
            <BsInstagram className="ml-[23px] size-[22px]" />
            <FaFacebookF className="ml-[20px] h-[24px] w-[15px]" />
          </div>
        </div>
        <LinkColumn
          className="ml-[236px] w-[285px]"
          listClass="ml-px mt-[29px]"
          title="SERVICES"
          links={["Opportunites", "Franchise", "Acquisition", "Register transfer", "Register repurchase"]}
        />
        <LinkColumn
          className=""
          listClass="ml-[3px] mt-[31px]"
          title="ABOUT US"
          links={["Careers", "Privacy Policy", "Terms of Use", "FAQS", "Contact us"]}
        />
      </div>
      <div className={`ml-[245px] mt-[77px] w-[1110px] whitespace-pre border-t border-[#353c42] pt-[25px] ${ARIAL} text-[14px] leading-[20px] tracking-[0.72px] text-[#f8f8f8]`}>
        {"© Copyright 2019 Design by "}<span className="text-[#ff6600]">Cizthemes.</span>{"  All Rights Reserved"}
      </div>
    </footer>
  );
}

export default function App() {
  return (
    <div className="w-[1600px] bg-white">
      <TopBar />
      <Header />
      <Nav />
      <Main />
      <Partners />
      <Footer />
    </div>
  );
}
